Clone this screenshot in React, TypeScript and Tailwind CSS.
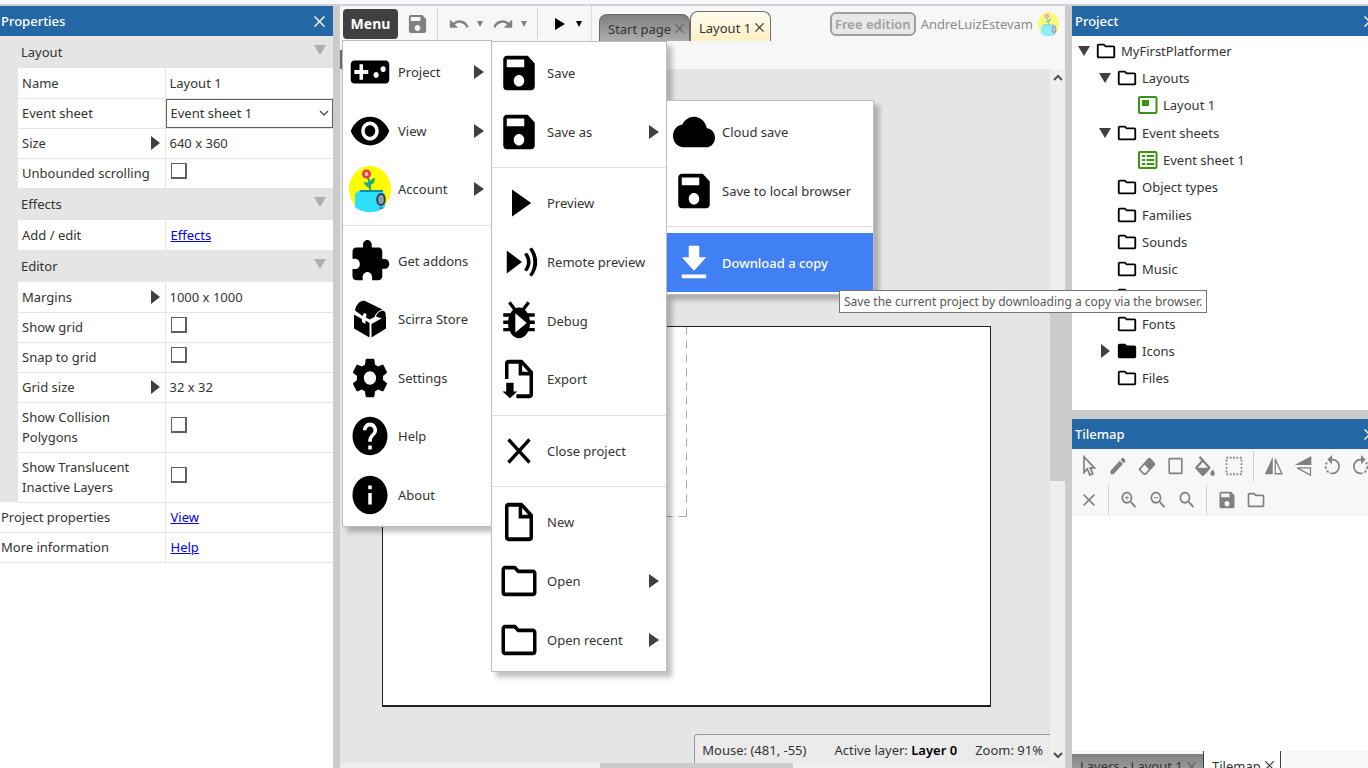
import React from "react";

type IconProps = { d: string; className?: string };

const paths = {
  save: "M17 3H5c-1.11 0-2 .9-2 2v14c0 1.1.89 2 2 2h14c1.1 0 2-.9 2-2V7l-4-4zm-5 16c-1.66 0-3-1.34-3-3s1.34-3 3-3 3 1.34 3 3-1.34 3-3 3zm3-10H5V5h10v4z",
  gamepad:
    "M21 6H3c-1.1 0-2 .9-2 2v8c0 1.1.9 2 2 2h18c1.1 0 2-.9 2-2V8c0-1.1-.9-2-2-2zm-10 7H8v3H6v-3H3v-2h3V8h2v3h3v2zm4.5 2c-.83 0-1.5-.67-1.5-1.5s.67-1.5 1.5-1.5 1.5.67 1.5 1.5-.67 1.5-1.5 1.5zm4-3c-.83 0-1.5-.67-1.5-1.5S18.67 9 19.5 9s1.5.67 1.5 1.5-.67 1.5-1.5 1.5z",
  eye: "M12 4.5C7 4.5 2.73 7.61 1 12c1.73 4.39 6 7.5 11 7.5s9.27-3.11 11-7.5c-1.73-4.39-6-7.5-11-7.5zM12 17c-2.76 0-5-2.24-5-5s2.24-5 5-5 5 2.24 5 5-2.24 5-5 5zm0-8c-1.66 0-3 1.34-3 3s1.34 3 3 3 3-1.34 3-3-1.34-3-3-3z",
  puzzle:
    "M20.5 11H19V7c0-1.1-.9-2-2-2h-4V3.5C13 2.12 11.88 1 10.5 1S8 2.12 8 3.5V5H4c-1.1 0-1.99.9-1.99 2v3.8H3.5c1.49 0 2.7 1.21 2.7 2.7s-1.21 2.7-2.7 2.7H2V20c0 1.1.9 2 2 2h3.8v-1.5c0-1.49 1.21-2.7 2.7-2.7 1.49 0 2.7 1.21 2.7 2.7V22H17c1.1 0 2-.9 2-2v-4h1.5c1.38 0 2.5-1.12 2.5-2.5S21.88 11 20.5 11z",
  gear: "M19.43 12.98c.04-.32.07-.64.07-.98s-.03-.66-.07-.98l2.11-1.65c.19-.15.24-.42.12-.64l-2-3.46c-.12-.22-.39-.3-.61-.22l-2.49 1c-.52-.4-1.08-.73-1.69-.98l-.38-2.65C14.46 2.18 14.25 2 14 2h-4c-.25 0-.46.18-.49.42l-.38 2.65c-.61.25-1.17.59-1.69.98l-2.49-1c-.23-.09-.49 0-.61.22l-2 3.46c-.13.22-.07.49.12.64l2.11 1.65c-.04.32-.07.65-.07.98s.03.66.07.98l-2.11 1.65c-.19.15-.24.42-.12.64l2 3.46c.12.22.39.3.61.22l2.49-1c.52.4 1.08.73 1.69.98l.38 2.65c.03.24.24.42.49.42h4c.25 0 .46-.18.49-.42l.38-2.65c.61-.25 1.17-.59 1.69-.98l2.49 1c.23.09.49 0 .61-.22l2-3.46c.12-.22.07-.49-.12-.64l-2.11-1.65zM12 15.5c-1.93 0-3.5-1.57-3.5-3.5s1.57-3.5 3.5-3.5 3.5 1.57 3.5 3.5-1.57 3.5-3.5 3.5z",
  help: "M12 2C6.48 2 2 6.48 2 12s4.48 10 10 10 10-4.48 10-10S17.52 2 12 2zm1 17h-2v-2h2v2zm2.07-7.75l-.9.92C13.45 12.9 13 13.5 13 15h-2v-.5c0-1.1.45-2.1 1.17-2.83l1.24-1.26c.37-.36.59-.86.59-1.41 0-1.1-.9-2-2-2s-2 .9-2 2H8c0-2.21 1.79-4 4-4s4 1.79 4 4c0 .88-.36 1.68-.93 2.25z",
  info: "M12 2C6.48 2 2 6.48 2 12s4.48 10 10 10 10-4.48 10-10S17.52 2 12 2zm1 15h-2v-6h2v6zm0-8h-2V7h2v2z",
  play: "M8 5v14l11-7z",
  remote:
    "M5 6v12l8.700-6zM16.500 7l-1.600.9c2.200 2.600 2.200 5.600 0 8.200l1.600.9c2.800-3.200 2.800-6.800 0-10zM19.400 4.400l-1.600.8c3.200 4.200 3.200 9.400 0 13.600l1.600.8c4-4.700 4-10.500 0-15.200z",
  close: "M18.700 6.700l-1.400-1.300L12 10.700 6.700 5.400 5.300 6.700 10.700 12l-5.400 5.300 1.400 1.300L12 13.300l5.300 5.300 1.400-1.300L13.300 12z",
  folder:
    "M20 6h-8l-2-2H4c-1.100 0-1.990.9-1.990 2L2 18c0 1.100.9 2 2 2h16c1.100 0 2-.9 2-2V8c0-1.100-.9-2-2-2zm0 12H4V6h5.200l2 2H20v10z",
  folderSolid:
    "M10 4H4c-1.100 0-1.990.9-1.990 2L2 18c0 1.100.9 2 2 2h16c1.100 0 2-.9 2-2V8c0-1.100-.9-2-2-2h-8l-2-2z",
  cloud:
    "M19.350 10.040C18.670 6.590 15.640 4 12 4 9.110 4 6.600 5.640 5.350 8.040 2.340 8.360 0 10.910 0 14c0 3.310 2.690 6 6 6h13c2.760 0 5-2.240 5-5 0-2.640-2.050-4.780-4.650-4.960z",
  download: "M19 9h-4V3H9v6H5l7 7 7-7zM5 18v2h14v-2H5z",
  undo: "M12.500 8c-2.650 0-5.050.99-6.900 2.600L2 7v9h9l-3.620-3.620c1.390-1.160 3.160-1.880 5.120-1.880 3.540 0 6.550 2.310 7.600 5.500l2.370-.78C21.080 11.030 17.150 8 12.500 8z",
  redo: "M18.400 10.600C16.550 8.990 14.150 8 11.500 8c-4.650 0-8.580 3.030-9.960 7.220L3.900 16c1.050-3.190 4.050-5.500 7.600-5.500 1.950 0 3.730.72 5.120 1.880L13 16h9V7l-3.600 3.600z",
  pencil:
    "M3 17.250V21h3.750L17.810 9.940l-3.750-3.750L3 17.250zM20.710 7.040c.39-.39.39-1.020 0-1.410l-2.340-2.340c-.39-.39-1.020-.39-1.410 0l-1.830 1.830 3.750 3.750 1.830-1.830z",
  eraser:
    "M16.240 3.560l4.950 4.940c.78.790.78 2.050 0 2.840L12 20.530a4.008 4.008 0 01-5.660 0L2.810 17c-.78-.79-.78-2.050 0-2.840l10.600-10.600c.79-.78 2.050-.78 2.830 0zM4.220 15.580l3.540 3.530c.78.790 2.040.79 2.830 0l3.530-3.530-4.950-4.950-4.950 4.950z",
  square:
    "M19 3H5c-1.100 0-2 .9-2 2v14c0 1.100.9 2 2 2h14c1.100 0 2-.9 2-2V5c0-1.100-.9-2-2-2zm0 16H5V5h14v14z",
  bucket:
    "M16.560 8.940L7.620 0 6.210 1.410l2.380 2.380-5.150 5.150c-.59.590-.59 1.540 0 2.120l5.500 5.500c.29.290.68.440 1.060.44s.77-.15 1.060-.44l5.500-5.500c.59-.58.59-1.530 0-2.120zM5.210 10L10 5.210 14.790 10H5.210zM19 11.500s-2 2.170-2 3.500c0 1.100.9 2 2 2s2-.9 2-2c0-1.330-2-3.500-2-3.500z",
  zoomIn:
    "M15.500 14h-.79l-.28-.27C15.410 12.590 16 11.110 16 9.500 16 5.910 13.090 3 9.500 3S3 5.910 3 9.500 5.910 16 9.500 16c1.610 0 3.090-.59 4.230-1.570l.27.28v.79l5 4.990L20.490 19l-4.990-5zm-6 0C7.010 14 5 11.990 5 9.500S7.010 5 9.500 5 14 7.010 14 9.500 11.990 14 9.500 14zM12 10h-2v2H9v-2H7V9h2V7h1v2h2v1z",
  zoomOut:
    "M15.500 14h-.79l-.28-.27C15.410 12.590 16 11.110 16 9.500 16 5.910 13.090 3 9.500 3S3 5.910 3 9.500 5.910 16 9.500 16c1.610 0 3.090-.59 4.230-1.570l.27.28v.79l5 4.990L20.490 19l-4.990-5zm-6 0C7.010 14 5 11.990 5 9.500S7.010 5 9.500 5 14 7.010 14 9.500 11.990 14 9.500 14zM7 9h5v1H7z",
  search:
    "M15.500 14h-.79l-.28-.27C15.410 12.590 16 11.110 16 9.500 16 5.910 13.090 3 9.500 3S3 5.910 3 9.500 5.910 16 9.500 16c1.610 0 3.090-.59 4.230-1.570l.27.28v.79l5 4.990L20.490 19l-4.990-5zm-6 0C7.010 14 5 11.990 5 9.500S7.010 5 9.500 5 14 7.010 14 9.500 11.990 14 9.500 14z",
};

const Icon = ({ d, className = "h-[46px] w-[42px]" }: IconProps) => (
  <svg viewBox="0 0 24 24" preserveAspectRatio="none" fill="currentColor" fillRule="evenodd" className={`shrink-0 ${className}`} aria-hidden="true">
    <path d={d} />
  </svg>
);

const Stroke = ({ children, className, width = 2 }: { children: React.ReactNode; className: string; width?: number }) => (
  <svg viewBox="0 0 24 24" preserveAspectRatio="none" fill="none" stroke="currentColor" strokeWidth={width} className={`shrink-0 ${className}`} aria-hidden="true">
    {children}
  </svg>
);

const big = "h-[46px] w-[42px]";
const tool = "h-[22px] w-[20px]";

const FileIcon = () => (
  <Stroke className={big}>
    <path strokeLinejoin="round" d="M5.500 3h8l5.500 5.500V20a1 1 0 01-1 1H6a1 1 0 01-1-1V3.500z" />
    <path d="M12.800 3v6.200H19" />
  </Stroke>
);

const ExportIcon = () => (
  <Stroke className={big}>
    <path strokeLinejoin="round" d="M5 12V4a1 1 0 011-1h7.500L19 8.500V20a1 1 0 01-1 1H10.500" />
    <path d="M12.800 3v6.200H19" />
    <path stroke="none" fill="currentColor" d="M4.700 14h4.200v4.500h2.100L6.800 22 2.600 18.500h2.100z" />
  </Stroke>
);

const DebugIcon = () => (
  <Stroke className={big} width={1.800}>
    <path d="M3 8.900h18M3 12.600h18M3 16.500h18M6.500 2.300L10 6.500M17.500 2.300L14 6.500" />
    <ellipse cx="12" cy="13" rx="6.300" ry="8" fill="currentColor" stroke="none" />
    <path d="M9.900 8l6.500 5-6.500 5z" fill="#fff" stroke="none" />
  </Stroke>
);

const ChestIcon = () => (
  <svg viewBox="0 0 34 38" preserveAspectRatio="none" fill="currentColor" className="mx-[4px] h-[38px] w-[34px] shrink-0" aria-hidden="true">
    <path d="M2 10.500C3 4.500 7.500 0 12 1l17.500 8.500c-4 1-7 4-8 7.500l-5 2.500-3.500-2 .5-3.500-2.500-1-1.500 3z" />
    <path d="M23 16.500c1-4 5-6.500 8-5.500 1.700 1 2 3.500 1.500 5.500l-3.500 2z" />
    <path d="M1 14.500l8 4.500v3l3.500 2v-3.500L16.500 23v14.500L1 28.500z" />
    <path d="M18.500 24L33 16v12.500l-14.500 9z" />
  </svg>
);

const Avatar = ({ className }: { className: string }) => (
  <svg viewBox="0 0 42 46" preserveAspectRatio="none" className={`shrink-0 ${className}`} aria-hidden="true">
    <ellipse cx="21" cy="23" rx="21" ry="23" fill="#fffb00" />
    <path d="M21 26C22 20 21 15 18 10M21 21c-3 0-4-2-5-4 3 0 5 1 5 4zM21 18c2 0 4-2 4-5-2 1-4 2-4 5z" stroke="#16a97b" strokeWidth="1.600" fill="#25bf8d" />
    <circle cx="17.500" cy="8" r="3.200" fill="#ffd37a" stroke="#e8336f" strokeWidth="2.600" />
    <path d="M6 28l4-3.500h22l4 3.500v13c-3 3-9 5-15 5-6 0-12-2-15-5z" fill="#2ce0fc" />
    <path d="M11 25h23" stroke="#1292a8" strokeWidth="2" />
    <ellipse cx="32" cy="33.500" rx="3.800" ry="5.600" fill="#8ea0ac" stroke="#2f4058" strokeWidth="2" />
    <path d="M30 42h4" stroke="#7a4fd0" strokeWidth="1.500" />
  </svg>
);

const Right = ({ className = "h-3.5 w-[9px] text-[#404040]" }: { className?: string }) => (
  <svg viewBox="0 0 9 14" preserveAspectRatio="none" className={`shrink-0 ${className}`} aria-hidden="true">
    <path d="M0 0l9 7-9 7z" fill="currentColor" />
  </svg>
);

const Down = ({ className = "h-2.5 w-3 text-[#404040]" }: { className?: string }) => (
  <svg viewBox="0 0 12 10" preserveAspectRatio="none" className={`shrink-0 ${className}`} aria-hidden="true">
    <path d="M0 0h12L6 10z" fill="currentColor" />
  </svg>
);

const Cross = ({ className = "h-2.5 w-2.5" }: { className?: string }) => (
  <svg viewBox="0 0 10 10" className={`shrink-0 ${className}`} aria-hidden="true">
    <path d="M.5.5l9 9M9.500.5l-9 9" stroke="currentColor" strokeWidth="1.300" />
  </svg>
);

const Chevron = ({ className, up = false, weight = 2 }: { className: string; up?: boolean; weight?: number }) => (
  <svg viewBox="0 0 10 7" className={`shrink-0 ${className}`} aria-hidden="true">
    <path d={up ? "M1 6l4-4 4 4" : "M1 1l4 4 4-4"} stroke="currentColor" strokeWidth={weight} fill="none" />
  </svg>
);

type Prop = { name: string; id?: string; value?: string; link?: string; check?: boolean; select?: boolean; expand?: boolean; tall?: boolean; outer?: boolean };

const PropRow = ({ p }: { p: Prop }) => (
  <tr className={p.tall ? "h-[50px]" : "h-[30px]"}>
    {!p.outer && <td className="w-[18px] bg-[#e5e5e5]" />}
    <th scope="row" colSpan={p.outer ? 2 : 1} className={`border-r border-b border-[#e5e5e5] text-left font-normal ${p.outer ? "pl-px" : "pl-1"}`}>
      <div className="flex items-center justify-between pr-[5px]">
        {p.id ? <label htmlFor={p.id} className={p.tall ? "w-[112px]" : "whitespace-nowrap"}>{p.name}</label> : <span>{p.name}</span>}
        {p.expand && <Right />}
      </div>
    </th>
    <td className="border-b border-[#e5e5e5]">
      {p.check && <input id={p.id} type="checkbox" className="mb-1 ml-[5px] block size-4 appearance-none border border-r-2 border-b-2 border-[#606060] bg-white" />}
      {p.value && !p.select && <span className="pl-1">{p.value}</span>}
      {p.link && <a href="#" className="pl-[5px] text-[#0000ee] underline">{p.link}</a>}
      {p.select && (
        <div className="relative">
          <select id={p.id} className="block h-[29px] w-full appearance-none border border-[#606060] bg-white pl-1">
            <option>{p.value}</option>
          </select>
          <Chevron weight={1.400} className="pointer-events-none absolute top-[11px] right-1 h-[7px] w-2.5 text-[#505050]" />
        </div>
      )}
    </td>
  </tr>
);

const SectionRow = ({ name }: { name: string }) => (
  <tr className="h-8 bg-[#e5e5e5]">
    <th scope="rowgroup" colSpan={3} className="pl-[21px] text-left font-normal">
      <div className="flex items-center justify-between pr-[7px]">
        <span>{name}</span>
        <Down className="mb-1 h-2.5 w-3 text-[#b0b0b0]" />
      </div>
    </th>
  </tr>
);

const PanelTitle = ({ title, pad = "pl-px" }: { title: string; pad?: string }) => (
  <div className={`flex h-[30px] shrink-0 items-center justify-between bg-[#2368a5] pr-2 font-medium text-white ${pad}`}>
    <h2>{title}</h2>
    <button type="button" aria-label={`Close ${title}`}><Cross className="size-[11px]" /></button>
  </div>
);

type Item = { label: string; icon: React.ReactNode; sub?: boolean; active?: boolean };

const MenuList = ({ groups, className }: { groups: Item[][]; className: string }) => (
  <div role="menu" className={`absolute flex flex-col border border-[#bdbdbd] bg-white py-[2px] shadow-[5px_5px_5px_rgba(0,0,0,0.25)] ${className}`}>
    {groups.map((g, gi) => (
      <React.Fragment key={gi}>
        {gi > 0 && <div role="separator" className="my-1.5 h-px shrink-0 bg-[#e0e0e0]" />}
        {g.map((it) => (
          <button
            key={it.label}
            type="button"
            role="menuitem"
            className={`flex min-h-0 flex-1 items-center gap-[7px] pr-[7px] pl-1.5 text-left ${it.active ? "bg-[#4080f4] font-medium text-white" : ""}`}
          >
            <span className={it.active ? "" : "text-black"}>{it.icon}</span>
            <span className="flex-1 whitespace-nowrap">{it.label}</span>
            {it.sub && <Right className="h-3.5 w-2.5 text-[#404040]" />}
          </button>
        ))}
      </React.Fragment>
    ))}
  </div>
);

const mainMenu: Item[][] = [
  [
    { label: "Project", icon: <Icon d={paths.gamepad} />, sub: true },
    { label: "View", icon: <Icon d={paths.eye} />, sub: true },
    { label: "Account", icon: <Avatar className={big} />, sub: true },
  ],
  [
    { label: "Get addons", icon: <Icon d={paths.puzzle} /> },
    { label: "Scirra Store", icon: <ChestIcon /> },
    { label: "Settings", icon: <Icon d={paths.gear} /> },
    { label: "Help", icon: <Icon d={paths.help} /> },
    { label: "About", icon: <Icon d={paths.info} /> },
  ],
];

const projectMenu: Item[][] = [
  [
    { label: "Save", icon: <Icon d={paths.save} /> },
    { label: "Save as", icon: <Icon d={paths.save} />, sub: true },
  ],
  [
    { label: "Preview", icon: <Icon d={paths.play} /> },
    { label: "Remote preview", icon: <Icon d={paths.remote} /> },
    { label: "Debug", icon: <DebugIcon /> },
    { label: "Export", icon: <ExportIcon /> },
  ],
  [{ label: "Close project", icon: <Icon d={paths.close} /> }],
  [
    { label: "New", icon: <FileIcon /> },
    { label: "Open", icon: <Icon d={paths.folder} />, sub: true },
    { label: "Open recent", icon: <Icon d={paths.folder} />, sub: true },
  ],
];

const saveMenu: Item[][] = [
  [
    { label: "Cloud save", icon: <Icon d={paths.cloud} /> },
    { label: "Save to local browser", icon: <Icon d={paths.save} /> },
  ],
  [{ label: "Download a copy", icon: <Icon d={paths.download} />, active: true }],
];

const treeIndent = ["pl-1.5", "pl-[27px]", "pl-12"];

const LayoutIcon = () => (
  <svg viewBox="0 0 20 18" className="mx-px h-[18px] w-5 shrink-0 text-[#3a9411]" aria-hidden="true">
    <rect x="1" y="1" width="17.500" height="16" rx="1" fill="none" stroke="currentColor" strokeWidth="2" />
    <path d="M4 4h7v6H4z" fill="currentColor" />
  </svg>
);

const SheetIcon = () => (
  <svg viewBox="0 0 20 18" className="mx-px h-[18px] w-5 shrink-0 text-[#3a9411]" aria-hidden="true">
    <rect x="1" y="1" width="17.500" height="16" rx="1" fill="none" stroke="currentColor" strokeWidth="2" />
    <path d="M4 4h3v2H4zM8.500 4H16v2H8.500zM4 8h3v2H4zM8.500 8H16v2H8.500zM4 12h3v2H4zM8.500 12H16v2H8.500z" fill="currentColor" />
  </svg>
);

const tree: { label: string; level: number; arrow?: "down" | "right"; kind?: "layout" | "sheet" | "solid" }[] = [
  { label: "MyFirstPlatformer", level: 0, arrow: "down" },
  { label: "Layouts", level: 1, arrow: "down" },
  { label: "Layout 1", level: 2, kind: "layout" },
  { label: "Event sheets", level: 1, arrow: "down" },
  { label: "Event sheet 1", level: 2, kind: "sheet" },
  { label: "Object types", level: 1 },
  { label: "Families", level: 1 },
  { label: "Sounds", level: 1 },
  { label: "Music", level: 1 },
  { label: "Videos", level: 1 },
  { label: "Fonts", level: 1 },
  { label: "Icons", level: 1, arrow: "right", kind: "solid" },
  { label: "Files", level: 1 },
];

const ToolButton = ({ label, children }: { label: string; children: React.ReactNode }) => (
  <button type="button" aria-label={label} className="flex h-[33px] w-[29px] shrink-0 items-center justify-center">
    {children}
  </button>
);

const ToolSep = () => <div className="mx-[5px] h-[30px] w-px shrink-0 bg-[#d0d0d0]" />;

export default function App() {
  return (
    <div className="flex h-screen w-full flex-col overflow-hidden bg-white font-['Noto_Sans','Segoe_UI',sans-serif] text-[13px] leading-5 text-[#333333]">
      <div className="h-[6px] shrink-0 border-b-2 border-[#d2d3d5] bg-[#f7f8fb]" />
      <div className="flex min-h-0 flex-1">
        <aside className="w-[333px] shrink-0">
          <PanelTitle title="Properties" />
          <table className="w-full table-fixed border-collapse">
            <colgroup>
              <col className="w-[18px]" />
              <col className="w-[147px]" />
              <col />
            </colgroup>
            <tbody>
              <SectionRow name="Layout" />
              <PropRow p={{ name: "Name", value: "Layout 1" }} />
              <PropRow p={{ name: "Event sheet", id: "sheet", value: "Event sheet 1", select: true }} />
              <PropRow p={{ name: "Size", value: "640 x 360", expand: true }} />
              <PropRow p={{ name: "Unbounded scrolling", id: "unbounded", check: true }} />
              <SectionRow name="Effects" />
              <PropRow p={{ name: "Add / edit", link: "Effects" }} />
              <SectionRow name="Editor" />
              <PropRow p={{ name: "Margins", value: "1000 x 1000", expand: true }} />
              <PropRow p={{ name: "Show grid", id: "grid", check: true }} />
              <PropRow p={{ name: "Snap to grid", id: "snap", check: true }} />
              <PropRow p={{ name: "Grid size", value: "32 x 32", expand: true }} />
              <PropRow p={{ name: "Show Collision Polygons", id: "polygons", check: true, tall: true }} />
              <PropRow p={{ name: "Show Translucent Inactive Layers", id: "translucent", check: true, tall: true }} />
              <PropRow p={{ name: "Project properties", link: "View", outer: true }} />
              <PropRow p={{ name: "More information", link: "Help", outer: true }} />
            </tbody>
          </table>
        </aside>
        <div className="w-[7px] shrink-0 bg-[#cbcbcb]" />

        <main className="relative flex min-w-0 flex-1 flex-col bg-[#f7f7f7]">
          <div className="flex h-[35px] shrink-0 items-center pl-[3px]">
            <button type="button" className="h-[30px] w-[55px] rounded-sm bg-[#404040] text-sm font-bold text-white">Menu</button>
            <button type="button" aria-label="Save" className="ml-2 text-[#808080]"><Icon d={paths.save} className="h-6 w-[23px]" /></button>
            <div className="ml-2 h-[31px] w-px bg-[#d4d4d4]" />
            <button type="button" aria-label="Undo" className="ml-2.5 text-[#808080]"><Icon d={paths.undo} className="h-[22px] w-[22px]" /></button>
            <button type="button" aria-label="Undo history" className="ml-[7px] text-[#808080]"><Down className="size-1.5" /></button>
            <button type="button" aria-label="Redo" className="ml-[9px] text-[#808080]"><Icon d={paths.redo} className="h-[22px] w-[22px]" /></button>
            <button type="button" aria-label="Redo history" className="ml-[7px] text-[#808080]"><Down className="size-1.5" /></button>
            <div className="ml-2.5 h-[31px] w-px bg-[#d4d4d4]" />
            <button type="button" aria-label="Preview" className="ml-[17px] text-black"><Right className="h-3 w-2.5" /></button>
            <button type="button" aria-label="Preview options" className="ml-[11px] text-black"><Down className="size-1.5" /></button>
            <div className="ml-[9px] h-[35px] w-px bg-[#dedede]" />
            <div className="ml-[7px] flex items-end self-end">
              <div className="flex h-[27px] w-[91px] items-center justify-between rounded-t-lg border border-b-0 border-[#6a6a6a] bg-linear-to-b from-[#808080] to-[#adadad] pt-px pr-[5px] pl-2">
                <span className="whitespace-nowrap">Start page</span>
                <button type="button" aria-label="Close Start page" className="text-[#606060]"><Cross className="size-[9px]" /></button>
              </div>
              <div className="flex h-[30px] w-[81px] items-center justify-between rounded-t-lg border border-b-0 border-[#707070] bg-linear-to-b from-[#fffbee] to-[#fff0c4] pt-0.5 pr-1.5 pl-2">
                <span className="whitespace-nowrap">Layout 1</span>
                <button type="button" aria-label="Close Layout 1"><Cross className="size-[9px]" /></button>
              </div>
            </div>
            <div className="ml-auto flex items-center gap-[5px] pr-1.5 text-[#8a8a8a]">
              <span className="rounded-md border-2 border-[#a0a0a0] bg-[#e8e8e8] px-[3px] font-semibold whitespace-nowrap text-[#a0a0a0]">Free edition</span>
              <span>AndreLuizEstevam</span>
              <Avatar className="h-6 w-[21px] opacity-50" />
            </div>
          </div>
          <div className="flex h-7 shrink-0 items-end">
            <div className="h-[19px] w-0.5 bg-[#6a6a6a]" />
          </div>

          <div className="flex min-h-0 flex-1">
            <div className="relative min-w-0 flex-1 overflow-hidden bg-[#e5e5e5]">
              <div className="absolute top-[257px] left-[42px] h-[381px] w-[609px] border border-b-2 border-[#222222] bg-white">
                <svg className="absolute top-0 left-0 h-[191px] w-[305px]" viewBox="0 0 305 191" aria-hidden="true">
                  <path d="M303.500 189.500V0M303.500 189.500H0" fill="none" stroke="#a8a8a8" strokeDasharray="8 6" />
                </svg>
              </div>
              <div className="absolute right-0 bottom-0 flex h-[34px] items-start justify-between rounded-tl-sm border-t border-l border-[#999999] bg-[#ebebeb] pt-[5px] pr-[7px] pl-[7px] whitespace-nowrap">
                <span className="pr-7">Mouse: (481, -55)</span>
                <span className="pr-[18px]">Active layer: <b className="font-semibold text-black">Layer 0</b></span>
                <span>Zoom: 91%</span>
              </div>
              <div className="absolute inset-x-0 bottom-0 flex h-[5px] bg-[#efefef]">
                <div className="ml-[260px] w-[193px] bg-[#cbcbcb]" />
              </div>
            </div>
            <div className="flex w-[15px] shrink-0 flex-col items-center bg-[#efefef]">
              <Chevron up className="mt-[5px] h-[7px] w-2.5 text-[#505050]" />
              <div className="mt-[225px] h-[175px] w-full bg-[#cbcbcb]" />
              <Chevron className="mt-auto mb-[9px] h-[7px] w-2.5 text-[#505050]" />
            </div>
          </div>

          <MenuList groups={mainMenu} className="top-[34px] left-[2px] h-[487px] w-[150px]" />
          <MenuList groups={projectMenu} className="top-[35px] left-[151px] h-[631px] w-[176px]" />
          <MenuList groups={saveMenu} className="top-[94px] left-[326px] h-[195px] w-[208px]" />
          <div role="tooltip" className="absolute top-[284px] left-[499px] z-10 border border-[#767676] bg-white px-1 text-xs leading-[21px] whitespace-nowrap text-[#575757]">
            Save the current project by downloading a copy via the browser.
          </div>
        </main>
        <div className="w-[7px] shrink-0 bg-[#cbcbcb]" />

        <aside className="flex w-[296px] shrink-0 flex-col overflow-hidden">
          <div className="-mr-[15px] flex flex-1 flex-col">
            <PanelTitle title="Project" pad="pl-[3px]" />
            <ul className="flex h-[356px] flex-col bg-white pt-px">
              {tree.map((t) => (
                <li key={t.label} className={`flex min-h-0 flex-1 items-center ${treeIndent[t.level]}`}>
                  <span className="mr-[5px] flex w-3 justify-center">
                    {t.arrow === "down" && <Down />}
                    {t.arrow === "right" && <Right />}
                  </span>
                  <span className="text-black">
                    {t.kind === "layout" && <LayoutIcon />}
                    {t.kind === "sheet" && <SheetIcon />}
                    {t.kind === "solid" && <Icon d={paths.folderSolid} className="size-[22px]" />}
                    {!t.kind && <Icon d={paths.folder} className="size-[22px]" />}
                  </span>
                  <span className="ml-1">{t.label}</span>
                </li>
              ))}
            </ul>
            <div className="mt-[18px] h-[9px] shrink-0 bg-[#cbcbcb]" />
            <PanelTitle title="Tilemap" pad="pl-[3px]" />
            <div className="shrink-0 overflow-hidden bg-[#f7f7f7] pl-0.5 text-[#808080]">
              <div className="flex h-[34px] items-center">
                <ToolButton label="Select">
                  <Stroke className={tool}><path d="M6 2v17l4-4 3 7 3.500-1.500-3-6.500h5z" /></Stroke>
                </ToolButton>
                <ToolButton label="Pencil"><Icon d={paths.pencil} className={tool} /></ToolButton>
                <ToolButton label="Eraser"><Icon d={paths.eraser} className={tool} /></ToolButton>
                <ToolButton label="Rectangle"><Icon d={paths.square} className="h-[22px] w-[19px]" /></ToolButton>
                <ToolButton label="Fill">
                  <svg viewBox="0 0 24 24" preserveAspectRatio="none" fill="currentColor" className="h-[28px] w-[26px] shrink-0" aria-hidden="true">
                    <path transform="translate(0 3.500)" d={paths.bucket} />
                  </svg>
                </ToolButton>
                <ToolButton label="Select area">
                  <Stroke className={tool}><path strokeDasharray="2 2" d="M3 3h18v18H3z" /></Stroke>
                </ToolButton>
                <ToolSep />
                <ToolButton label="Mirror">
                  <Stroke className={tool} width={1.5}>
                    <path d="M10.500 2v19H1z" fill="currentColor" stroke="none" />
                    <path d="M13.500 4.500v16h8z" />
                  </Stroke>
                </ToolButton>
                <ToolButton label="Flip">
                  <Stroke className={tool} width={1.5}>
                    <path d="M22 1v10H2z" fill="currentColor" stroke="none" />
                    <path d="M21 14v8L5 14z" />
                  </Stroke>
                </ToolButton>
                <ToolButton label="Rotate left">
                  <Stroke className={tool}>
                    <path d="M9 5h4a7.500 7.500 0 010 15" />
                    <path strokeDasharray="3 2" d="M13 20A7.500 7.500 0 016 8" />
                    <path d="M12 0L6.500 5 12 10z" fill="currentColor" stroke="none" />
                  </Stroke>
                </ToolButton>
                <ToolButton label="Rotate right">
                  <Stroke className={tool}>
                    <path d="M15 5h-4a7.500 7.500 0 000 15" />
                    <path strokeDasharray="3 2" d="M11 20A7.500 7.500 0 0018 8" />
                    <path d="M12 0l5.500 5L12 10z" fill="currentColor" stroke="none" />
                  </Stroke>
                </ToolButton>
              </div>
              <div className="flex h-[33px] items-center">
                <ToolButton label="Clear"><Cross className="size-3" /></ToolButton>
                <ToolSep />
                <ToolButton label="Zoom in"><Icon d={paths.zoomIn} className={tool} /></ToolButton>
                <ToolButton label="Zoom out"><Icon d={paths.zoomOut} className={tool} /></ToolButton>
                <ToolButton label="Reset zoom"><Icon d={paths.search} className={tool} /></ToolButton>
                <ToolSep />
                <ToolButton label="Save tilemap"><Icon d={paths.save} className={tool} /></ToolButton>
                <ToolButton label="Open tilemap"><Icon d={paths.folder} className={tool} /></ToolButton>
              </div>
            </div>
            <div className="mt-auto flex h-[17px] shrink-0 items-start overflow-hidden bg-[#f7f7f7]">
              <div className="mt-[3px] flex h-6 w-[131px] items-center justify-between bg-linear-to-b from-[#808080] to-[#adadad] pr-[7px] pl-2">
                <span className="whitespace-nowrap">Layers - Layout 1</span>
                <Cross className="size-[9px] text-[#606060]" />
              </div>
              <div className="flex h-7 w-[78px] items-center justify-between border-x border-[#404040] bg-white pt-px pr-1.5 pl-2">
                <span>Tilemap</span>
                <Cross className="size-[9px]" />
              </div>
            </div>
          </div>
        </aside>
      </div>
    </div>
  );
}
